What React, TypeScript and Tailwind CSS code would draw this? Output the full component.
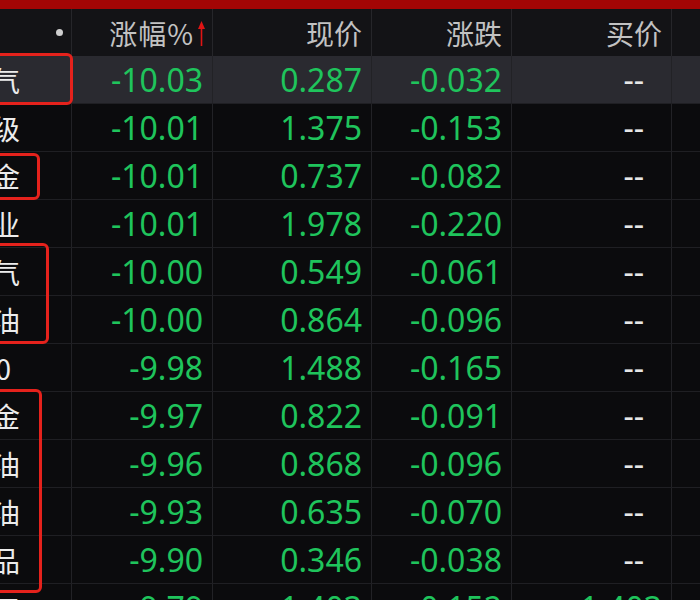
import React from "react";

type Row = {
  name: string;
  pct: string;
  price: string;
  change: string;
  bid: string;
  narrow?: boolean;
};

const rows: Row[] = [
  { name: "重庆燃气", pct: "-10.03", price: "0.287", change: "-0.032", bid: "--" },
  { name: "中国一级", pct: "-10.01", price: "1.375", change: "-0.153", bid: "--" },
  { name: "中国黄金", pct: "-10.01", price: "0.737", change: "-0.082", bid: "--" },
  { name: "长城实业", pct: "-10.01", price: "1.978", change: "-0.220", bid: "--" },
  { name: "新奥燃气", pct: "-10.00", price: "0.549", change: "-0.061", bid: "--" },
  { name: "中国石油", pct: "-10.00", price: "0.864", change: "-0.096", bid: "--" },
  { name: "沪深300", pct: "-9.98", price: "1.488", change: "-0.165", bid: "--", narrow: true },
  { name: "上海黄金", pct: "-9.97", price: "0.822", change: "-0.091", bid: "--" },
  { name: "国际原油", pct: "-9.96", price: "0.868", change: "-0.096", bid: "--" },
  { name: "南方原油", pct: "-9.93", price: "0.635", change: "-0.070", bid: "--" },
  { name: "大宗商品", pct: "-9.90", price: "0.346", change: "-0.038", bid: "--" },
  { name: "中证军工", pct: "-9.79", price: "1.403", change: "-0.152", bid: "1.403" },
];

const num = "font-['Noto_Sans','Liberation_Sans',sans-serif] text-[32px] leading-none";
const cjk = "font-['Noto_Sans_CJK_SC','Noto_Sans',sans-serif]";

export default function App() {
  return (
    <div className="relative w-[700px] h-[600px] overflow-hidden bg-[#0b0b0d]">
      {/* window edge */}
      <div className="h-[9px] bg-[#a30505]" />

      {/* header */}
      <div className={`flex h-[47px] bg-[#131316] text-[28px] text-[#c2c2c2] ${cjk}`}>
        <div className="w-[72px] shrink-0 flex items-center justify-end pr-[8px] border-r border-[#26262a]">
          <span className="w-[7px] h-[7px] rounded-full bg-[#cfcfcf]" />
        </div>
        <div className="w-[141px] shrink-0 flex items-center justify-end pr-[6px] border-r border-[#26262a]">
          <span className="tracking-[1px]">涨幅%</span>
          <svg className="ml-[3px]" width="9" height="28" viewBox="0 0 9 28">
            <path d="M4.5 2 L8 10 L5.3 10 L5.3 27 L3.7 27 L3.7 10 L1 10 Z" fill="#e01414" />
          </svg>
        </div>
        <div className="w-[159px] shrink-0 flex items-center justify-end pr-[9px] border-r border-[#26262a]">
          现价
        </div>
        <div className="w-[140px] shrink-0 flex items-center justify-end pr-[9px] border-r border-[#26262a]">
          涨跌
        </div>
        <div className="w-[160px] shrink-0 flex items-center justify-end pr-[9px] border-r border-[#26262a]">
          买价
        </div>
        <div className="flex-1" />
      </div>

      {/* rows */}
      {rows.map((r, i) => (
        <div
          key={i}
          className={`flex h-[48px] border-b border-[#1f1f23] ${i === 0 ? "bg-[#2a2a30]" : "bg-[#0b0b0d]"}`}
        >
          <div className="w-[72px] shrink-0 border-r border-[#222226] flex items-center">
            <div
              className={`${r.narrow ? "w-[11px]" : "w-[20px]"} flex justify-end whitespace-nowrap text-[28px] text-[#ececec] ${cjk}`}
            >
              {r.name}
            </div>
          </div>
          <div className={`w-[141px] shrink-0 flex items-center justify-end pr-[9px] border-r border-[#222226] text-[#1fc45c] ${num}`}>
            {r.pct}
          </div>
          <div className={`w-[159px] shrink-0 flex items-center justify-end pr-[9px] border-r border-[#222226] text-[#1fc45c] ${num}`}>
            {r.price}
          </div>
          <div className={`w-[140px] shrink-0 flex items-center justify-end pr-[9px] border-r border-[#222226] text-[#1fc45c] ${num}`}>
            {r.change}
          </div>
          <div
            className={`w-[160px] shrink-0 flex items-center justify-end border-r border-[#222226] ${num} ${
              r.bid === "--" ? "pr-[27px] text-[#e6e6e6] text-[24px]" : "pr-[9px] text-[#1fc45c]"
            }`}
          >
            {r.bid}
          </div>
          <div className="flex-1" />
        </div>
      ))}

      {/* red annotation boxes */}
      <div className="absolute left-[-12px] top-[53px] w-[85px] h-[52px] border-[3px] border-[#e5221c] rounded-[6px]" />
      <div className="absolute left-[-12px] top-[153px] w-[52px] h-[47px] border-[3px] border-[#e5221c] rounded-[6px]" />
      <div className="absolute left-[-12px] top-[243px] w-[61px] h-[101px] border-[3px] border-[#e5221c] rounded-[6px]" />
      <div className="absolute left-[-12px] top-[389px] w-[54px] h-[204px] border-[3px] border-[#e5221c] rounded-[6px]" />
    </div>
  );
}
